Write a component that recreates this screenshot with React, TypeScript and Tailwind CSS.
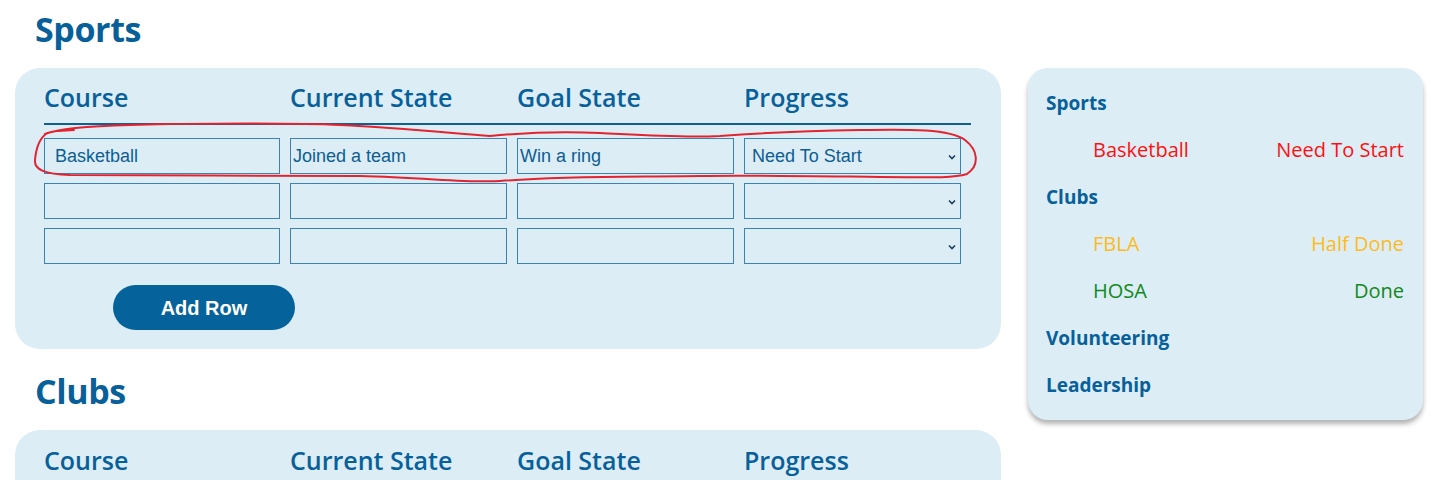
import React from "react";

const COLS = ["Course", "Current State", "Goal State", "Progress"];

type Row = { course: string; current: string; goal: string; progress: string };

const SPORTS: Row[] = [
  { course: "Basketball", current: "Joined a team", goal: "Win a ring", progress: "Need To Start" },
  { course: "", current: "", goal: "", progress: "" },
  { course: "", current: "", goal: "", progress: "" },
];

const fira = "font-['Open_Sans','Noto_Sans',sans-serif]";
const arial = "font-['Liberation_Sans',Arial,sans-serif]";

// red hand-drawn loop, page coordinates shifted into the card
function Scribble() {
  return (
    <svg
      className="pointer-events-none absolute left-0 top-0 overflow-visible"
      width="986"
      height="200"
      viewBox="0 0 986 200"
      fill="none"
    >
      <g transform="translate(-15,-68)">
        <path
          d="M58 131 L74 130 M45 134 C60 128 90 126 130 125 C200 123 300 123 340 125 C400 128 450 133 490 136 C520 133 560 131 600 133 C640 135 680 138 720 136 C760 133 800 131 860 130 C910 129 950 129 965 140 C978 150 980 165 967 174 C950 179 920 177 880 177 C800 176 740 175 700 176 C620 177 560 176 500 181 C470 183 430 178 360 176 C280 175 150 176 70 175 C45 174 34 170 35 160 C36 148 40 138 47 133"
          stroke="#e3242f"
          strokeWidth="2"
          strokeLinecap="round"
          strokeLinejoin="round"
        />
      </g>
    </svg>
  );
}

function TrackerCard({ rows, scribble }: { rows: Row[]; scribble?: boolean }) {
  return (
    <div className="relative rounded-[25px] bg-[#dcedf6] pl-[29px] pr-[30px] pt-[12px] pb-[19px]">
      <div className={`grid grid-cols-[246px_227px_227px_227px] border-b-2 border-[#0f5f92] pb-[9px] ${fira}`}>
        {COLS.map((c) => (
          <div key={c} className="text-[25px] font-semibold leading-[34px] text-[#07609a]">
            {c}
          </div>
        ))}
      </div>
      <div className="mt-[13px] flex flex-col gap-[9px]">
        {rows.map((r, i) => (
          <div key={i} className={`grid grid-cols-[246px_227px_227px_227px] ${arial}`}>
            <input
              readOnly
              value={r.course}
              className="h-[36px] w-[236px] border border-[#3b82b6] bg-transparent pl-[10px] text-[18px] text-[#0d5d92] outline-none"
            />
            <input
              readOnly
              value={r.current}
              className="h-[36px] w-[217px] border border-[#3b82b6] bg-transparent pl-[2px] text-[18px] text-[#0d5d92] outline-none"
            />
            <input
              readOnly
              value={r.goal}
              className="h-[36px] w-[217px] border border-[#3b82b6] bg-transparent pl-[2px] text-[18px] text-[#0d5d92] outline-none"
            />
            <div className="relative h-[36px] w-[217px] border border-[#3b82b6] pl-[7px] text-[18px] leading-[34px] text-[#0d5d92]">
              {r.progress}
              <svg className="absolute right-[4px] top-[15px]" width="8" height="6" viewBox="0 0 8 6" fill="none">
                <path d="M1 1.5 L4 4.5 L7 1.5" stroke="#1b3f5c" strokeWidth="1.6" />
              </svg>
            </div>
          </div>
        ))}
      </div>
      <button
        className={`ml-[69px] mt-[21px] h-[45px] w-[182px] rounded-full bg-[#05629b] text-[20px] font-bold text-white ${arial}`}
      >
        Add Row
      </button>
      {scribble && <Scribble />}
    </div>
  );
}

const SUMMARY = [
  { title: "Sports", items: [{ name: "Basketball", status: "Need To Start", color: "text-[#ff1010]" }] },
  {
    title: "Clubs",
    items: [
      { name: "FBLA", status: "Half Done", color: "text-[#fdbb1c]" },
      { name: "HOSA", status: "Done", color: "text-[#11891b]" },
    ],
  },
  { title: "Volunteering", items: [] },
  { title: "Leadership", items: [] },
];

export default function App() {
  return (
    <div className={`flex min-h-screen gap-[27px] bg-white pl-[15px] pr-[9px] ${fira}`}>
      <div className="w-[986px] shrink-0">
        <h1 className="pl-[20px] pt-[5px] text-[34px] font-bold leading-[48px] tracking-[-0.4px] text-[#07609a]">
          Sports
        </h1>
        <div className="mt-[15px]">
          <TrackerCard rows={SPORTS} scribble />
        </div>
        <h1 className="mt-[18px] pl-[20px] text-[34px] font-bold leading-[48px] tracking-[-0.4px] text-[#07609a]">
          Clubs
        </h1>
        <div className="mt-[15px]">
          <div className="rounded-t-[25px] bg-[#dcedf6] pl-[29px] pr-[30px] pt-[13px] pb-[20px]">
            <div className="grid grid-cols-[246px_227px_227px_227px]">
              {COLS.map((c) => (
                <div key={c} className="text-[25px] font-semibold leading-[34px] text-[#07609a]">
                  {c}
                </div>
              ))}
            </div>
          </div>
        </div>
      </div>
      <div className="mt-[68px] h-[352px] w-[395px] rounded-[20px] bg-[#dcedf6] pl-[18px] pr-[19px] pt-[21px] shadow-[0_4px_5px_rgba(0,0,0,0.3)]">
        <div className="flex flex-col gap-[19px]">
          {SUMMARY.map((s) => (
            <React.Fragment key={s.title}>
              <div className="text-[19px] font-bold leading-[28px] text-[#07609a]">{s.title}</div>
              {s.items.map((it) => (
                <div key={it.name} className={`flex justify-between pl-[47px] text-[20px] leading-[28px] ${it.color}`}>
                  <span>{it.name}</span>
                  <span>{it.status}</span>
                </div>
              ))}
            </React.Fragment>
          ))}
        </div>
      </div>
    </div>
  );
}
